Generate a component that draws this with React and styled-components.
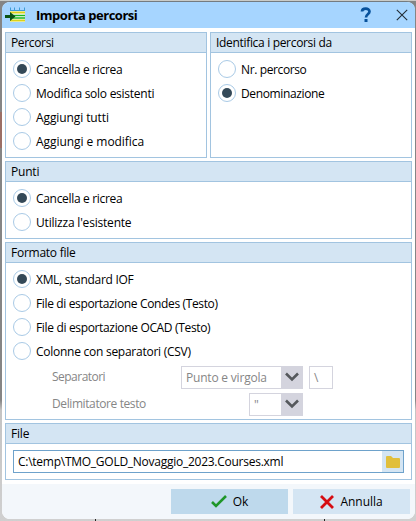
import React from "react";
import styled, { createGlobalStyle } from "styled-components";

const GlobalStyle = createGlobalStyle`
  * { box-sizing: border-box; }
  body { margin: 0; overflow: hidden; }
`;

const Desktop = styled.div`
  width: 416px;
  height: 521px;
  padding: 1px 1px 2px 2px;
  background:
    linear-gradient(#9b6f66, #9b6f66) 0 112px / 2px 36px no-repeat,
    linear-gradient(#222, #222) 95px 519px / 1px 2px no-repeat,
    linear-gradient(#222, #222) 324px 519px / 1px 2px no-repeat,
    linear-gradient(#c9cbc8, #c9cbc8) 0 0 / 416px 1px no-repeat,
    linear-gradient(#858585 0, #858585 400px, #c4c4c4 410px, #d0d0d0 521px);
  font: 12px/18px "Open Sans", "Noto Sans", sans-serif;
  color: #000;
`;

const Dialog = styled.main`
  display: flex;
  flex-direction: column;
  height: 518px;
  overflow: hidden;
  background: #fff;
  border-top: 1px solid #747b80;
  border-radius: 8px;
`;

const TitleBar = styled.header`
  display: flex;
  align-items: center;
  flex: none;
  height: 26px;
  padding: 0 7px 0 3px;
  background: #a6d5ff;
`;

const Title = styled.h1`
  flex: 1;
  margin: 0 0 1px 11px;
  font-size: 13px;
  font-weight: 700;
  letter-spacing: -0.48px;
`;

const HelpIcon = styled.svg`
  width: 12px;
  height: 16px;
  margin-right: 24px;
`;

const CloseIcon = styled.svg`
  width: 12px;
  height: 12px;
`;

const Body = styled.div`
  display: flex;
  flex-direction: column;
  gap: 3px;
  padding: 4px 3px 0 3px;
`;

const Columns = styled.div`
  display: grid;
  grid-template-columns: 202px 202px;
  gap: 3px;
`;

const Group = styled.section`
  height: ${(p) => p.$height}px;
  border: 1px solid #a2c4e0;
`;

const GroupTitle = styled.h2`
  height: 20px;
  margin: 0;
  padding-left: 5px;
  border-bottom: 1px solid #a2c4e0;
  background: #d4e5f3;
  font-size: 12px;
  font-weight: 400;
  line-height: 20px;
`;

const Spaced = styled.span`
  letter-spacing: ${(p) => p.$ls || 0}px;
  white-space: pre;
`;

const Options = styled.div`
  display: flex;
  flex-direction: column;
  padding: 4px 0 0 7px;
`;

const Option = styled.label`
  display: flex;
  align-items: center;
  gap: 5px;
  height: 24px;
  line-height: 20px;
`;

const OptionText = styled(Spaced)`
  padding-top: 2px;
`;

const Dot = styled.span`
  display: grid;
  place-items: center;
  width: 18px;
  height: 18px;
  border: 1px solid #a9cae6;
  border-radius: 50%;
  &::after {
    content: "";
    width: 10px;
    height: 10px;
    border-radius: 50%;
    background: ${(p) => (p.$checked ? "#344958" : "transparent")};
  }
`;

const SettingRow = styled.div`
  display: grid;
  grid-template-columns: 123px 122px 24px;
  column-gap: 6px;
  align-items: center;
  height: 24px;
  margin: ${(p) => p.$top}px 0 0 46px;
  color: #868686;
`;

const Select = styled.div`
  display: flex;
  justify-self: end;
  width: ${(p) => p.$width}px;
  height: 23px;
  border: 1px solid #d4d4de;
  line-height: 21px;
`;

const SelectValue = styled.span`
  flex: 1;
  padding-left: 4px;
`;

const SelectArrow = styled.span`
  display: grid;
  place-items: center;
  width: 21px;
  background: #d4d4de;
`;

const CharBox = styled.div`
  height: 23px;
  padding-left: 4px;
  border: 1px solid #d4d4de;
  line-height: 21px;
`;

const FileField = styled.div`
  display: flex;
  height: 23px;
  margin: 6px 7px 0;
  border: 1px solid #6ea2cb;
  line-height: 21px;
`;

const FilePath = styled.span`
  flex: 1;
  padding-left: 4px;
`;

const Browse = styled.span`
  display: grid;
  place-items: center;
  width: 21px;
  background: #d4e5f3;
`;

const Footer = styled.footer`
  display: flex;
  justify-content: flex-end;
  gap: 5px;
  flex: 1;
  margin-top: 4px;
  padding: 5px 5px 0 0;
  background: #f3f7fb;
`;

const Button = styled.button`
  display: flex;
  align-items: center;
  justify-content: center;
  gap: 6px;
  width: 117px;
  height: 25px;
  padding: 0;
  border: 0;
  background: ${(p) => (p.$primary ? "#bed9ec" : "#d4e5f3")};
  color: #000;
  font: inherit;
`;

const Radio = ({ label, ls, checked }) => (
  <Option>
    <Dot $checked={checked} />
    <OptionText $ls={ls}>{label}</OptionText>
  </Option>
);

const Chevron = () => (
  <svg width="14" height="10" viewBox="0 0 14 10">
    <path d="M1 1.5L7 7.5L13 1.5" fill="none" stroke="#55585c" strokeWidth="2.6" />
  </svg>
);

const AppIcon = () => (
  <svg width="20" height="16" viewBox="0 0 20 16">
    <path d="M5 3h15v12H5z" fill="#fff" />
    <path d="M5.500 0.500v3M9.500 0.500v3M14.500 0.500v3M19.500 0.500v3M5 3.500h15" stroke="#3d9bd6" />
    <path d="M5 5.500h15M5 13.500h15" stroke="#d9d21c" strokeWidth="2" />
    <path d="M8 8.500h12M8 11h12" stroke="#19b51f" strokeWidth="1.300" />
    <path d="M0 8h5V5l5.500 4.500L5 14v-3H0z" fill="#0a5415" />
  </svg>
);

export default function App() {
  return (
    <>
      <GlobalStyle />
      <Desktop>
        <Dialog>
          <TitleBar>
            <AppIcon />
            <Title>Importa percorsi</Title>
            <HelpIcon viewBox="0 0 12 16">
              <path d="M2 4.500C2 .9 9.500 .5 9.500 4.500C9.500 7.500 6 7 6 10.500" fill="none" stroke="#08529c" strokeWidth="2.700" />
              <path d="M4.500 12h3v3h-3z" fill="#08529c" />
            </HelpIcon>
            <CloseIcon viewBox="0 0 12 12">
              <path d="M.8.8l10.400 10.400M11.200.8L.8 11.200" stroke="#222d36" strokeWidth="1.100" />
            </CloseIcon>
          </TitleBar>
          <Body>
            <Columns>
              <Group $height={126}>
                <GroupTitle><Spaced $ls={-0.35}>Percorsi</Spaced></GroupTitle>
                <Options>
                  <Radio label="Cancella e ricrea" ls={-0.32} checked />
                  <Radio label="Modifica solo esistenti" ls={-0.26} />
                  <Radio label="Aggiungi tutti" ls={-0.1} />
                  <Radio label="Aggiungi e modifica" ls={-0.05} />
                </Options>
              </Group>
              <Group $height={126}>
                <GroupTitle><Spaced $ls={-0.32}>Identifica i percorsi da</Spaced></GroupTitle>
                <Options>
                  <Radio label="Nr. percorso" ls={-0.38} />
                  <Radio label="Denominazione" ls={-0.36} checked />
                </Options>
              </Group>
            </Columns>
            <Group $height={78}>
              <GroupTitle><Spaced $ls={-0.2}>Punti</Spaced></GroupTitle>
              <Options>
                <Radio label="Cancella e ricrea" ls={-0.32} checked />
                <Radio label="Utilizza l'esistente" ls={-0.2} />
              </Options>
            </Group>
            <Group $height={178}>
              <GroupTitle><Spaced $ls={-0.26}>Formato file</Spaced></GroupTitle>
              <Options>
                <Radio label="XML, standard IOF" ls={-0.3} checked />
                <Radio label="File di esportazione Condes (Testo)" ls={-0.36} />
                <Radio label="File di esportazione OCAD (Testo)" ls={-0.34} />
                <Radio label="Colonne con separatori (CSV)" ls={-0.26} />
              </Options>
              <SettingRow $top={2}>
                <Spaced $ls={-0.52}>Separatori</Spaced>
                <Select $width={122}>
                  <SelectValue><Spaced $ls={-0.2}>Punto e virgola</Spaced></SelectValue>
                  <SelectArrow><Chevron /></SelectArrow>
                </Select>
                <CharBox>\</CharBox>
              </SettingRow>
              <SettingRow $top={3}>
                <Spaced $ls={-0.4}>Delimitatore testo</Spaced>
                <Select $width={54}>
                  <SelectValue>"</SelectValue>
                  <SelectArrow><Chevron /></SelectArrow>
                </Select>
              </SettingRow>
            </Group>
            <Group $height={57}>
              <GroupTitle><Spaced $ls={-0.2}>File</Spaced></GroupTitle>
              <FileField>
                <FilePath>
                  <Spaced $ls={-0.26}>C:\temp\TMO_GOLD_Novaggio_2023.Courses.xml</Spaced>
                </FilePath>
                <Browse>
                  <svg width="14" height="12" viewBox="0 0 14 12">
                    <path d="M0 1Q0 0 1 0h4l2 2h6q1 0 1 1v8q0 1-1 1H1q-1 0-1-1z" fill="#e1bf3b" />
                  </svg>
                </Browse>
              </FileField>
            </Group>
          </Body>
          <Footer>
            <Button $primary>
              <svg width="16" height="13" viewBox="0 0 16 13">
                <path d="M1 7l4 4L15 1" fill="none" stroke="#1f9629" strokeWidth="2.600" />
              </svg>
              <Spaced>Ok</Spaced>
            </Button>
            <Button>
              <svg width="14" height="14" viewBox="0 0 14 14">
                <path d="M1 1l12 12M13 1L1 13" fill="none" stroke="#d60d12" strokeWidth="2.800" />
              </svg>
              <Spaced $ls={-0.05}>Annulla</Spaced>
            </Button>
          </Footer>
        </Dialog>
      </Desktop>
    </>
  );
}
